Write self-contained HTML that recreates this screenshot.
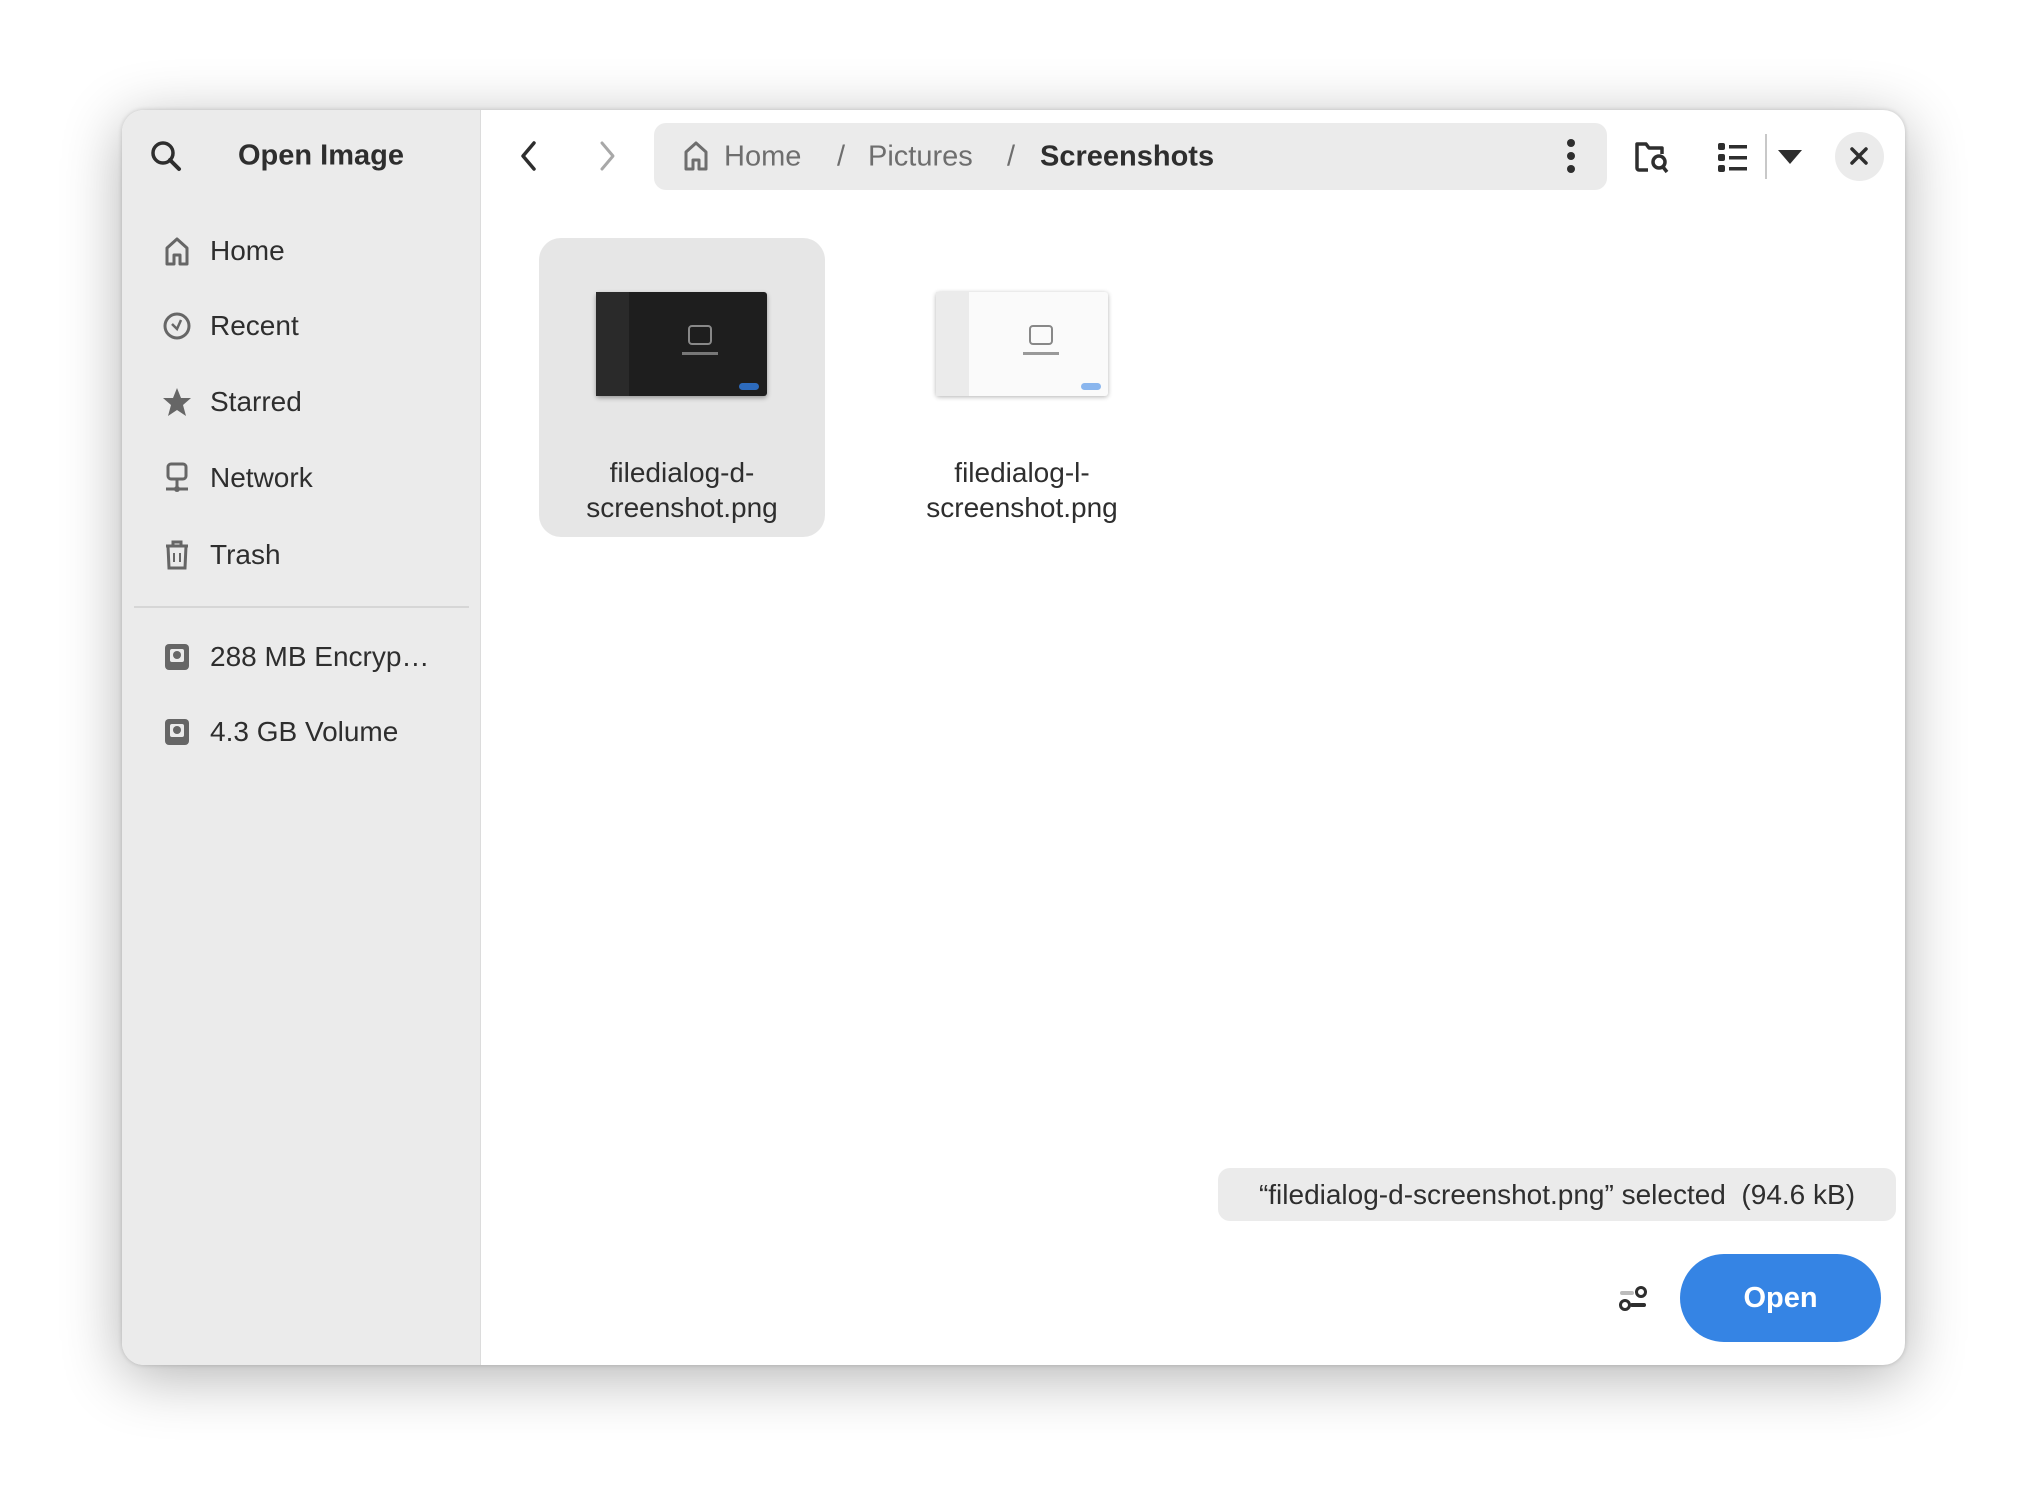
<!DOCTYPE html>
<html><head><meta charset="utf-8"><style>
*{margin:0;padding:0;box-sizing:border-box}
body{width:2028px;height:1500px;background:#fff;position:relative;overflow:hidden;font-family:"Liberation Sans",sans-serif;color:#2e2e2e}
.dlg{position:absolute;left:122px;top:110px;width:1783px;height:1255px;border-radius:22px;background:#fff;box-shadow:0 12px 60px rgba(0,0,0,.3),0 0 5px rgba(0,0,0,.18);overflow:hidden}
.side{position:absolute;left:0;top:0;width:359px;height:100%;background:#ebebeb;border-right:1px solid #dcdcdc}
.a{position:absolute;white-space:nowrap}
.it{position:absolute;left:88px;font-size:28px;transform:translateY(-50%)}
.ic{position:absolute;transform:translate(-50%,-50%)}
.path{position:absolute;left:532px;top:13px;width:953px;height:67px;background:#ebebeb;border-radius:12px}
.pt{position:absolute;top:50%;transform:translateY(-50%);font-size:29px;color:#6e6e6e}
.fn{position:absolute;width:286px;text-align:center;font-size:28px;line-height:35px;color:#2e2e2e}
</style></head><body>
<div class="dlg">
 <div class="side">
  <svg class="ic" style="left:44px;top:46px" width="34" height="34" viewBox="0 0 34 34"><circle cx="14" cy="14" r="10" fill="none" stroke="#2e2e2e" stroke-width="3.5"/><path d="M21 21l9 9" stroke="#2e2e2e" stroke-width="4" stroke-linecap="round"/></svg>
  <div class="a" style="left:116px;top:46px;transform:translateY(-50%);font-size:29px;font-weight:bold;color:#2e2e2e">Open Image</div>

  <svg class="ic" style="left:55px;top:141px" width="28" height="30" viewBox="0 0 28 30"><path d="M4 28V12L14 3l10 9v16H17V19h-6v9z" fill="none" stroke="#666" stroke-width="3" stroke-linejoin="round"/></svg>
  <div class="it" style="top:141px">Home</div>
  <svg class="ic" style="left:55px;top:216px" width="30" height="30" viewBox="0 0 30 30"><circle cx="15" cy="15" r="12" fill="none" stroke="#666" stroke-width="3"/><path d="M10 13l5 5 4-9" fill="none" stroke="#666" stroke-width="2.5"/></svg>
  <div class="it" style="top:216px">Recent</div>
  <svg class="ic" style="left:55px;top:292px" width="32" height="32" viewBox="0 0 32 32"><path d="M16 2l4 10h10l-8 7 3 11-9-6-9 6 3-11-8-7h10z" fill="#666"/></svg>
  <div class="it" style="top:292px">Starred</div>
  <svg class="ic" style="left:55px;top:368px" width="28" height="32" viewBox="0 0 28 32"><rect x="5" y="2" width="18" height="15" rx="3" fill="none" stroke="#666" stroke-width="3"/><path d="M14 17v10M3 27h22" stroke="#666" stroke-width="3"/><circle cx="14" cy="27" r="3" fill="#666"/></svg>
  <div class="it" style="top:368px">Network</div>
  <svg class="ic" style="left:55px;top:445px" width="28" height="32" viewBox="0 0 28 32"><path d="M3 7h22M10 7V3h8v4M5 7l1 22h16l1-22" fill="none" stroke="#666" stroke-width="3"/><path d="M11 14v9M17 14v9" stroke="#666" stroke-width="2"/></svg>
  <div class="it" style="top:445px">Trash</div>
  <div class="a" style="left:12px;top:496px;width:335px;height:2px;background:#d6d6d6"></div>
  <svg class="ic" style="left:55px;top:547px" width="28" height="30" viewBox="0 0 28 30"><rect x="2" y="2" width="24" height="26" rx="4" fill="#666"/><rect x="7" y="7" width="14" height="13" rx="2" fill="#ebebeb"/><circle cx="14" cy="13" r="4" fill="#666"/></svg>
  <div class="it" style="top:547px">288 MB Encryp…</div>
  <svg class="ic" style="left:55px;top:622px" width="28" height="30" viewBox="0 0 28 30"><rect x="2" y="2" width="24" height="26" rx="4" fill="#666"/><rect x="7" y="7" width="14" height="13" rx="2" fill="#ebebeb"/><circle cx="14" cy="13" r="4" fill="#666"/></svg>
  <div class="it" style="top:622px">4.3 GB Volume</div>
 </div>

 <svg class="ic" style="left:407px;top:46px" width="24" height="34" viewBox="0 0 24 34"><path d="M17 4L6 17l11 13" fill="none" stroke="#2e2e2e" stroke-width="3.5" stroke-linecap="round" stroke-linejoin="round"/></svg>
 <svg class="ic" style="left:485px;top:46px" width="24" height="34" viewBox="0 0 24 34"><path d="M7 4l11 13L7 30" fill="none" stroke="#a8a8a8" stroke-width="3" stroke-linecap="round" stroke-linejoin="round"/></svg>

 <div class="path">
  <svg class="ic" style="left:42px;top:33px" width="28" height="32" viewBox="0 0 28 32"><path d="M4 29V12L14 3l10 9v17H17V20h-6v9z" fill="none" stroke="#6e6e6e" stroke-width="3" stroke-linejoin="round"/></svg>
  <div class="pt" style="left:70px">Home</div>
  <div class="pt" style="left:183px">/</div>
  <div class="pt" style="left:214px">Pictures</div>
  <div class="pt" style="left:353px">/</div>
  <div class="pt" style="left:386px;color:#2e2e2e;font-weight:bold">Screenshots</div>
  <svg class="ic" style="left:917px;top:33px" width="10" height="36" viewBox="0 0 10 36"><circle cx="5" cy="5" r="4" fill="#2e2e2e"/><circle cx="5" cy="18" r="4" fill="#2e2e2e"/><circle cx="5" cy="31" r="4" fill="#2e2e2e"/></svg>
 </div>

 <svg class="ic" style="left:1530px;top:47px" width="36" height="34" viewBox="0 0 36 34"><path d="M14 30H5a2 2 0 0 1-2-2V4h9l3 4h13v6" fill="none" stroke="#2e2e2e" stroke-width="3.5" stroke-linejoin="round"/><circle cx="25" cy="22" r="6" fill="none" stroke="#2e2e2e" stroke-width="3.5"/><path d="M29 27l4 5" stroke="#2e2e2e" stroke-width="3.5"/></svg>
 <svg class="ic" style="left:1611px;top:47px" width="32" height="32" viewBox="0 0 32 32"><rect x="1" y="2" width="7" height="7" rx="2" fill="#2e2e2e"/><rect x="1" y="13" width="7" height="7" rx="2" fill="#2e2e2e"/><rect x="1" y="24" width="7" height="7" rx="2" fill="#2e2e2e"/><rect x="12" y="4" width="18" height="3.5" fill="#2e2e2e"/><rect x="12" y="15" width="18" height="3.5" fill="#2e2e2e"/><rect x="12" y="26" width="18" height="3.5" fill="#2e2e2e"/></svg>
 <div class="a" style="left:1643px;top:24px;width:2px;height:45px;background:#c8c8c8"></div>
 <svg class="ic" style="left:1668px;top:47px" width="24" height="14" viewBox="0 0 24 14"><path d="M0 0h24L12 14z" fill="#2e2e2e"/></svg>
 <div class="a" style="left:1713px;top:22px;width:49px;height:49px;border-radius:50%;background:#ebebeb"></div>
 <svg class="ic" style="left:1737px;top:46px" width="20" height="20" viewBox="0 0 20 20"><path d="M3 3l14 14M17 3L3 17" stroke="#2e2e2e" stroke-width="3.5" stroke-linecap="round"/></svg>

 <div class="a" style="left:417px;top:128px;width:286px;height:299px;border-radius:22px;background:#e6e6e6"></div>
 <div class="a" style="left:474px;top:182px;width:171px;height:104px;background:#1e1e1e;border-radius:3px;box-shadow:0 2px 5px rgba(0,0,0,.35)">
  <div class="a" style="left:0;top:0;width:33px;height:104px;background:#2a2a2a"></div>
  <div class="a" style="left:92px;top:33px;width:24px;height:20px;border:2.5px solid #888;border-radius:4px"></div>
  <div class="a" style="left:86px;top:60px;width:36px;height:3px;background:#777"></div>
  <div class="a" style="left:143px;top:91px;width:20px;height:7px;border-radius:4px;background:#2d6bbd"></div>
 </div>
 <div class="fn" style="left:417px;top:345px">filedialog-d-<br>screenshot.png</div>

 <div class="a" style="left:814px;top:182px;width:172px;height:104px;background:#fafafa;border-radius:3px;box-shadow:0 1px 5px rgba(0,0,0,.3)">
  <div class="a" style="left:0;top:0;width:33px;height:104px;background:#ebebeb"></div>
  <div class="a" style="left:93px;top:33px;width:24px;height:20px;border:2.5px solid #888;border-radius:4px"></div>
  <div class="a" style="left:87px;top:60px;width:36px;height:3px;background:#999"></div>
  <div class="a" style="left:145px;top:91px;width:20px;height:7px;border-radius:4px;background:#8ab6ee"></div>
 </div>
 <div class="fn" style="left:757px;top:345px">filedialog-l-<br>screenshot.png</div>

 <div class="a" style="left:1096px;top:1058px;width:678px;height:53px;border-radius:12px;background:#ebebeb;font-size:28px;line-height:53px;text-align:center;color:#2e2e2e">“filedialog-d-screenshot.png” selected&nbsp; (94.6 kB)</div>

 <svg class="ic" style="left:1511px;top:1188px" width="30" height="30" viewBox="0 0 30 30"><rect x="2" y="8" width="14" height="4" rx="2" fill="#bbb"/><circle cx="23" cy="9" r="4.5" fill="none" stroke="#2e2e2e" stroke-width="3"/><circle cx="7" cy="22" r="4.5" fill="none" stroke="#2e2e2e" stroke-width="3"/><rect x="12" y="20" width="16" height="4" rx="2" fill="#2e2e2e"/></svg>
 <div class="a" style="left:1558px;top:1144px;width:201px;height:88px;border-radius:44px;background:#3584e4;color:#fff;font-size:29px;font-weight:bold;line-height:88px;text-align:center">Open</div>
</div>
</body></html>
